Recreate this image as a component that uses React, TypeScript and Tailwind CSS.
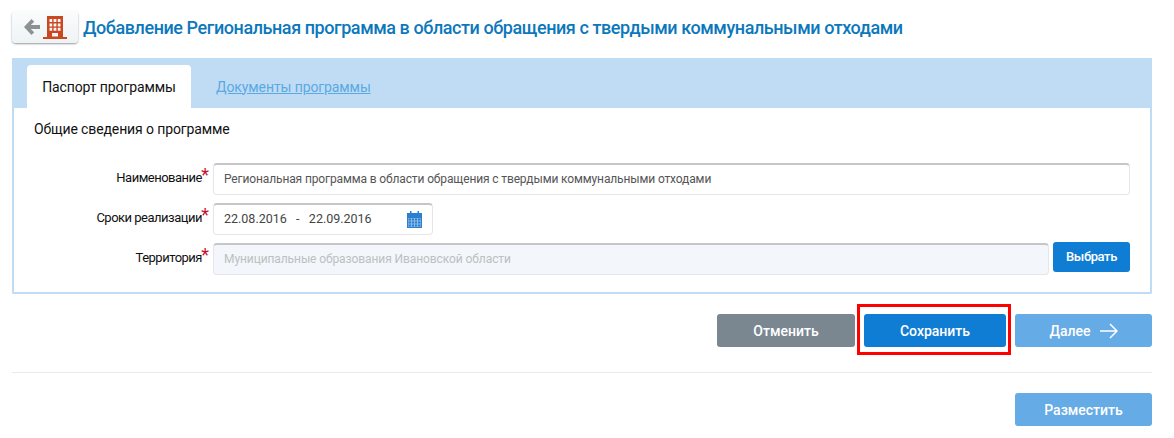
const font = { fontFamily: 'Roboto, sans-serif' }

const Star = () => (
  <span className="absolute right-[-7px] top-[-3px] text-[18px] leading-[20px] tracking-normal text-[#c4122f]">*</span>
)

const FieldLabel = ({ children }: { children: string }) => (
  <div className="flex w-[188px] justify-end pt-[5px]">
    <span className="relative text-[13px] leading-[20px] tracking-[-0.5px] text-[#111]">
      {children}
      <Star />
    </span>
  </div>
)

const inputClass =
  'flex h-[32px] items-center rounded-[4px] border border-[#e3e7ea] border-t-2 border-t-[#c4c6c8] px-[10px] text-[12px]'

const App = () => {
  return (
    <div style={font} className="relative h-[438px] w-[1174px] overflow-hidden bg-white">
      <div className="flex h-[58px] items-start gap-[6px] pl-[12px] pt-[11px]">
        <button className="flex h-[32px] w-[66px] items-center justify-center gap-[3px] rounded-[4px] bg-gradient-to-b from-[#fbfcfc] to-[#eef3f6] shadow-[0_1px_2px_rgba(0,0,0,0.4)]">
          <svg width="16" height="16" viewBox="0 0 16 16" fill="#8c9194">
            <path d="M0 8 7.5 0 10.2 2.7 6.8 6H16V10H6.8L10.2 13.3 7.5 16Z" />
          </svg>
          <svg width="24" height="23" viewBox="0 0 24 23" fill="#cc4620">
            <path
              fillRule="evenodd"
              d="M4 0H20V21H24V23H0V21H4ZM6.5 3V6H9.2V3ZM10.6 3V6H13.4V3ZM14.8 3V6H17.5V3ZM6.5 7.4V10.4H9.2V7.4ZM10.6 7.4V10.4H13.4V7.4ZM14.8 7.4V10.4H17.5V7.4ZM6.5 11.8V14.8H9.2V11.8ZM10.6 11.8V14.8H13.4V11.8ZM14.8 11.8V14.8H17.5V11.8ZM9 17V20.5H15V17Z"
            />
          </svg>
        </button>
        <h1 className="-ml-px h-[32px] text-[18px] font-medium leading-[34px] tracking-[-0.43px] text-[#0c78bc]">
          Добавление Региональная программа в области обращения с твердыми коммунальными отходами
        </h1>
      </div>

      <div className="mx-[12px] h-[236px] w-[1140px] rounded-[2px] border-2 border-t-0 border-[#c0dcf5]">
        <div className="-mx-[2px] flex h-[50px] items-end gap-[25px] bg-[#c0dcf5] pl-[15px]">
          <div className="flex h-[43px] w-[164px] items-center justify-center rounded-t-[4px] bg-white pt-[1px] text-[14px] tracking-[-0.1px] text-[#111]">
            Паспорт программы
          </div>
          <a className="flex h-[43px] items-center pt-[1px] text-[14px] tracking-[-0.1px] text-[#5aa9e2] underline">
            Документы программы
          </a>
        </div>
        <div className="pl-[20px] pt-[12px] text-[14px] leading-[18px] tracking-[-0.12px] text-[#111]">
          Общие сведения о программе
        </div>
        <div className="mt-[25px] flex flex-col gap-[8px]">
          <div className="flex gap-[11px]">
            <FieldLabel>Наименование</FieldLabel>
            <div className={`${inputClass} w-[917px] pb-[1px] tracking-[-0.13px] text-[#555]`}>
              Региональная программа в области обращения с твердыми коммунальными отходами
            </div>
          </div>
          <div className="flex gap-[11px]">
            <FieldLabel>Сроки реализации</FieldLabel>
            <div className={`${inputClass} w-[220px] justify-between text-[#444]`}>
              <span className="text-[12.5px]">22.08.2016&nbsp;&nbsp; - &nbsp;&nbsp;22.09.2016</span>
              <svg width="15" height="17" viewBox="0 0 15 17" fill="#2a7fd0">
                <path
                  fillRule="evenodd"
                  d="M0 2H3V0H4.5V2H10.5V0H12V2H15V17H0ZM1 7V16H14V7ZM1.5 7.5H4V9.5H1.5ZM5 7.5H7V9.5H5ZM8 7.5H10V9.5H8ZM11 7.5H13.5V9.5H11ZM1.5 10.5H4V12.5H1.5ZM5 10.5H7V12.5H5ZM8 10.5H10V12.5H8ZM11 10.5H13.5V12.5H11ZM1.5 13.5H4V15.5H1.5ZM5 13.5H7V15.5H5ZM8 13.5H10V15.5H8ZM11 13.5H13.5V15.5H11Z"
                />
                <path opacity="0.55" d="M1 7H14V16H1Z" />
              </svg>
            </div>
          </div>
          <div className="flex gap-[11px]">
            <FieldLabel>Территория</FieldLabel>
            <div className={`${inputClass} w-[836px] bg-[#f3f6fa] pb-[1px] tracking-[-0.09px] text-[#bdbfc2]`}>
              Муниципальные образования Ивановской области
            </div>
            <button className="ml-[-7px] mt-[-1px] h-[30px] w-[77px] rounded-[3px] bg-[#0f7dd4] text-[13px] font-medium tracking-[-0.4px] text-white">
              Выбрать
            </button>
          </div>
        </div>
      </div>

      <div className="ml-[717px] mt-[20px] flex gap-[9px]">
        <button className="h-[33px] w-[138px] rounded-[3px] bg-[#7a8791] pt-[2px] text-[14px] font-medium text-white">
          Отменить
        </button>
        <button className="h-[33px] w-[142px] rounded-[3px] bg-[#0f7dd4] pt-[2px] text-[14px] font-medium text-white">
          Сохранить
        </button>
        <button className="flex h-[33px] w-[137px] items-center justify-center gap-[9px] rounded-[3px] bg-[#65abe5] pt-[2px] text-[14px] font-medium text-white">
          Далее
          <svg className="-mt-[2px]" width="18" height="16" viewBox="0 0 18 16" fill="none" stroke="white" strokeWidth="1.5">
            <path d="M0 8H17M10 1 17 8 10 15" />
          </svg>
        </button>
      </div>

      <div className="mx-[12px] mt-[25px] h-px w-[1140px] bg-[#e8eaeb]" />

      <div className="ml-[1015px] mt-[20px]">
        <button className="h-[33px] w-[137px] rounded-[3px] bg-[#65abe5] pt-[1px] text-[14px] font-medium text-white">
          Разместить
        </button>
      </div>

      <div className="absolute left-[857px] top-[304px] h-[51px] w-[154px] border-[3px] border-[#ff0000]" />
    </div>
  )
}

export default App
